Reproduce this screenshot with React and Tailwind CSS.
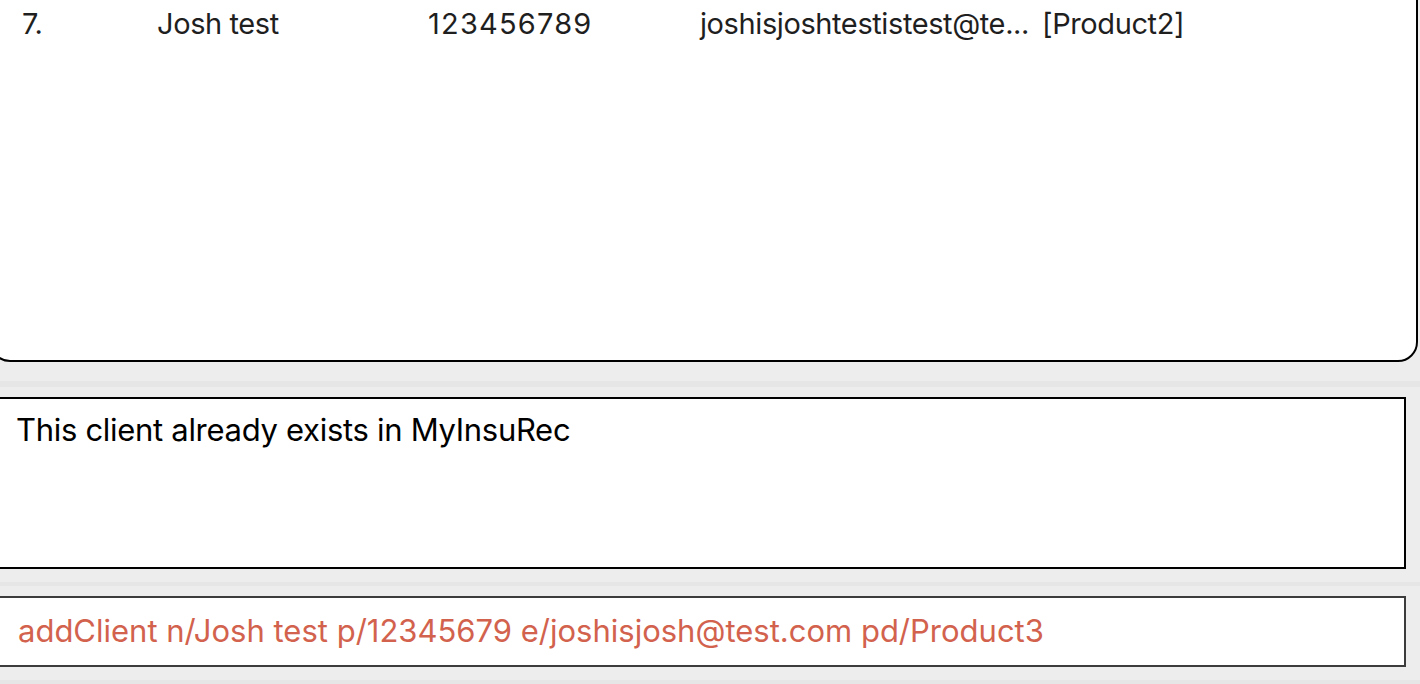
export default function App() {
  const font = { fontFamily: 'Inter, "Noto Sans", sans-serif' }
  return (
    <div className="h-[684px] w-[1420px] overflow-hidden bg-[#ededed]" style={font}>
      <div className="-ml-[10px] mr-[2px] -mt-[40px] h-[402px] rounded-[20px] border-2 border-black bg-white">
        <div className="mt-[40px] flex items-center whitespace-nowrap pl-[30px] pt-[2px] text-[29px] leading-[40px] tracking-[-0.4px] text-[#1f1f1f]">
          <div className="w-[135px]">7.</div>
          <div className="w-[271px]">Josh test</div>
          <div className="w-[272px] tracking-[1.2px]">123456789</div>
          <div className="w-[342px]">joshisjoshtestistest@te...</div>
          <div>[Product2]</div>
        </div>
      </div>
      <div className="mt-[19px] h-[6px] bg-[#e6e6e6]" />
      <div className="-ml-[10px] mr-[14px] mt-[10px] h-[172px] border-2 border-black bg-white pl-[24px] pt-[9px] text-[31px] leading-[44px] tracking-[-0.3px] text-black">
        This client already exists in MyInsuRec
      </div>
      <div className="mt-[13px] h-[4px] bg-[#e6e6e6]" />
      <div className="-ml-[10px] mr-[14px] mt-[10px] flex h-[71px] items-center whitespace-nowrap border-2 border-[#3c3c3c] bg-white pl-[26px] text-[31px] tracking-[0px] text-[#d2624d]">
        addClient n/Josh test p/12345679 e/joshisjosh@test.com pd/Product3
      </div>
      <div className="mt-[13px] h-[4px] bg-[#e6e6e6]" />
    </div>
  )
}
